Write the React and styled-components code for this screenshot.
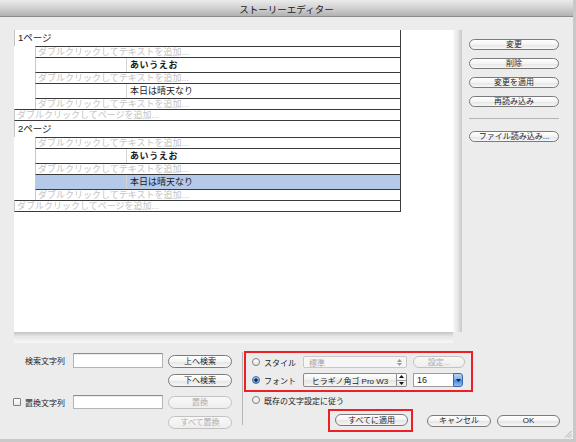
import React from 'react';
import styled, { createGlobalStyle } from 'styled-components';

const FONT = `"Liberation Sans", "Noto Sans CJK JP", sans-serif`;

const GlobalStyle = createGlobalStyle`
  html, body { margin: 0; padding: 0; background: #c9c9c9; }
  body { font-family: ${FONT}; }
  * { box-sizing: border-box; }
`;

const Window = styled.div`
  position: relative;
  width: 573px;
  height: 439px;
  background: #ececec;
  display: flex;
  flex-direction: column;
  font-family: ${FONT};
  color: #1e1e1e;
  overflow: hidden;
`;

const TitleBar = styled.div`
  flex: none;
  height: 17px;
  padding-top: 1px;
  background: linear-gradient(to bottom, #ebebeb 0%, #d4d4d4 45%, #b2b2b2 100%);
  border-bottom: 1px solid #8a8a8a;
  display: flex;
  align-items: center;
  justify-content: center;
  font-size: 9.5px;
  color: #1a1a1a;
`;

const TopArea = styled.div`
  display: flex;
  padding: 13px 0 0 14px;
`;

const ScrollFrame = styled.div`
  display: grid;
  grid-template-columns: 439px 9px;
  grid-template-rows: 302px 11px;
`;

const Canvas = styled.div`
  background: #fff;
  overflow: hidden;
`;

const VTrack = styled.div`
  background: linear-gradient(to right, #f9f9f9, #e8e8e8 50%, #c8c8c8);
`;

const HTrack = styled.div`
  background: linear-gradient(to bottom, #c4c4c4, #e6e6e6 40%, #f8f8f8);
`;

const Outline = styled.div`
  width: 387px;
  border-right: 1px solid #3c3c3c;
`;

const PageHeader = styled.div`
  height: 16px;
  padding-left: 3px;
  border-left: 1px solid #c4c4c4;
  font-size: 9.5px;
  line-height: 15px;
  color: #222;
`;

const PlaceholderRow = styled.div`
  height: ${p => (p.$page ? 12 : 11)}px;
  margin-left: ${p => (p.$page ? 0 : 21)}px;
  border-top: 1px solid #3a3a3a;
  border-bottom: ${p => (p.$page ? '1px solid #3a3a3a' : 'none')};
  border-left: 1px solid #c8c8c8;
  padding-left: 2px;
  font-size: 9px;
  line-height: 10px;
  color: #c4c4c4;
  white-space: nowrap;
  overflow: hidden;
`;

const ContentRow = styled.div`
  height: 15px;
  margin-left: 21px;
  display: flex;
  border-top: 1px solid #3a3a3a;
  border-left: 1px solid #c8c8c8;
  background: ${p => (p.$selected ? '#b5c9e8' : '#fff')};
`;

const KeyCell = styled.div`
  width: 91px;
  border-right: 1px solid #d4d4d4;
`;

const TextCell = styled.div`
  padding-left: 3px;
  font-size: 9px;
  line-height: 14px;
  color: #1a1a1a;
  font-weight: ${p => (p.$bold ? 700 : 400)};
  letter-spacing: ${p => (p.$bold ? '0.6px' : '0')};
`;

const SidePanel = styled.div`
  display: flex;
  flex-direction: column;
  gap: 8px;
  margin: 9px 0 0 7px;
  width: 90px;
`;

const SideSeparator = styled.div`
  height: 1px;
  background: #b4b4b4;
  margin: 3px 0 4px;
`;

const PillButton = styled.button`
  flex: none;
  width: ${p => p.$w}px;
  height: ${p => p.$h || 12}px;
  padding: 0;
  margin-top: ${p => p.$mt || 0}px;
  border-radius: 7px;
  border: 1px solid ${p => (p.disabled ? '#c2c2c2' : '#7a7a7a')};
  background: ${p =>
    p.disabled
      ? 'linear-gradient(to bottom, #f8f8f8, #eeeeee)'
      : 'linear-gradient(to bottom, #ffffff 0%, #f4f4f4 50%, #e6e6e6 55%, #f7f7f7 100%)'};
  font-family: ${FONT};
  font-size: 8px;
  line-height: 9px;
  color: ${p => (p.disabled ? '#adadad' : '#1e1e1e')};
  display: flex;
  align-items: center;
  justify-content: center;
  white-space: nowrap;
  grid-column: ${p => p.$col || 'auto'};
`;

const BottomArea = styled.div`
  display: flex;
`;

const SearchGrid = styled.div`
  width: 242px;
  margin-top: 10px;
  display: grid;
  grid-template-columns: 73px 95px 64px;
  grid-template-rows: 21px 21px 21px 14px;
  align-items: start;
`;

const FieldLabel = styled.div`
  grid-column: 1;
  justify-self: end;
  padding-right: 8px;
  height: ${p => p.$h || 15}px;
  display: flex;
  align-items: center;
  gap: 4px;
  font-size: 8px;
  color: #222;
  white-space: nowrap;
`;

const TextField = styled.div`
  width: 90px;
  height: ${p => p.$h || 15}px;
  background: #fff;
  border: 1px solid #b4b4b4;
  border-top-color: #8e8e8e;
  box-shadow: inset 0 1px 0 rgba(0, 0, 0, 0.08);
`;

const CheckBox = styled.span`
  width: 8px;
  height: 8px;
  border: 1px solid #7f7f7f;
  border-radius: 1px;
  background: linear-gradient(to bottom, #fff, #e9e9e9);
`;

const VSeparator = styled.div`
  flex: none;
  width: 1px;
  height: 73px;
  margin-top: 9px;
  background: #b6b6b6;
`;

const Options = styled.div`
  display: flex;
  flex-direction: column;
  padding-top: 8px;
`;

const Highlight = styled.div`
  border: 2px solid #ec2027;
`;

const OptionBox = styled(Highlight)`
  margin-left: 1px;
  width: 229px;
  height: 41px;
  padding: 3px 0 3px 6px;
  display: flex;
  flex-direction: column;
  gap: 5px;
`;

const OptionRow = styled.div`
  display: flex;
  align-items: center;
  height: ${p => p.$h}px;
  padding-left: ${p => p.$pl || 0}px;
  margin-top: ${p => p.$mt || 0}px;
`;

const Radio = styled.span`
  flex: none;
  width: 8px;
  height: 8px;
  border-radius: 50%;
  border: 1px solid ${p => (p.$on ? '#46689c' : '#7f7f7f')};
  background: ${p =>
    p.$on
      ? 'radial-gradient(circle, #14213f 0 1.4px, transparent 1.9px), linear-gradient(to bottom, #b4d4f6, #5b97e0)'
      : 'linear-gradient(to bottom, #ffffff, #e6e6e6)'};
`;

const OptLabel = styled.span`
  width: ${p => p.$w || 'auto'};
  margin-left: 4px;
  font-size: 8px;
  color: #222;
  white-space: nowrap;
`;

const SelectBox = styled.div`
  width: 104px;
  height: 12px;
  display: flex;
  align-items: center;
  justify-content: space-between;
  padding: 0 4px 0 5px;
  background: #f6f6f6;
  border: 1px solid #c8c8c8;
  border-radius: 2px;
  font-size: 8px;
  color: #a4a4a4;
`;

const Popup = styled.div`
  width: 94px;
  height: 14px;
  display: flex;
  align-items: center;
  justify-content: center;
  background: linear-gradient(to bottom, #ffffff, #f0f0f0 50%, #e4e4e4 55%, #f6f6f6);
  border: 1px solid #8a8a8a;
  border-radius: 2px 0 0 2px;
  font-size: 8px;
  color: #1e1e1e;
  white-space: nowrap;
`;

const Stepper = styled.div`
  width: 10px;
  height: 14px;
  display: flex;
  flex-direction: column;
  border: 1px solid #8a8a8a;
  border-left: none;
  border-radius: 0 2px 2px 0;
  background: linear-gradient(to bottom, #fff, #eaeaea);
`;

const StepHalf = styled.div`
  flex: 1;
  display: flex;
  align-items: center;
  justify-content: center;
  border-top: ${p => (p.$bottom ? '1px solid #9a9a9a' : 'none')};
`;

const Combo = styled.div`
  margin-left: 6px;
  display: flex;
  height: 14px;
`;

const ComboField = styled.div`
  width: 40px;
  height: 14px;
  background: #fff;
  border: 1px solid #9c9c9c;
  border-right: none;
  padding-left: 3px;
  font-family: "Liberation Sans", sans-serif;
  font-size: 9px;
  line-height: 12px;
  color: #1e1e1e;
`;

const ComboButton = styled.div`
  width: 10px;
  height: 14px;
  border: 1px solid #3f66a8;
  border-radius: 0 3px 3px 0;
  background: linear-gradient(to bottom, #b9d6f7 0%, #78aae9 50%, #4d88db 55%, #8cc0f4 100%);
  display: flex;
  align-items: center;
  justify-content: center;
`;

const ButtonRow = styled.div`
  display: flex;
  align-items: center;
  margin-top: 3px;
`;

const ApplyBox = styled(Highlight)`
  margin-left: 85px;
  width: 85px;
  height: 23px;
  padding: 3px 0 0 5px;
`;

const Grip = styled.svg`
  position: absolute;
  right: 1px;
  bottom: 1px;
`;

const Arrow = ({ dir, color, size = 4 }) => (
  <svg width={size + 1} height={size - 1} viewBox="0 0 5 3">
    {dir === 'up' ? (
      <path d="M2.5 0 L5 3 L0 3 Z" fill={color} />
    ) : (
      <path d="M0 0 L5 0 L2.5 3 Z" fill={color} />
    )}
  </svg>
);

const UpDown = styled.div`
  display: flex;
  flex-direction: column;
  gap: 1px;
`;

function PageBlock({ title, selected }) {
  return (
    <>
      <PageHeader>{title}</PageHeader>
      <PlaceholderRow>ダブルクリックしてテキストを追加...</PlaceholderRow>
      <ContentRow>
        <KeyCell />
        <TextCell $bold>あいうえお</TextCell>
      </ContentRow>
      <PlaceholderRow>ダブルクリックしてテキストを追加...</PlaceholderRow>
      <ContentRow $selected={selected}>
        <KeyCell />
        <TextCell>本日は晴天なり</TextCell>
      </ContentRow>
      <PlaceholderRow>ダブルクリックしてテキストを追加...</PlaceholderRow>
      <PlaceholderRow $page>ダブルクリックしてページを追加...</PlaceholderRow>
    </>
  );
}

export default function App() {
  return (
    <>
      <GlobalStyle />
      <Window>
        <TitleBar>ストーリーエディター</TitleBar>
        <TopArea>
          <ScrollFrame>
            <Canvas>
              <Outline>
                <PageBlock title="1ページ" />
                <PageBlock title="2ページ" selected />
              </Outline>
            </Canvas>
            <VTrack />
            <HTrack />
          </ScrollFrame>
          <SidePanel>
            <PillButton $w={90} $h={11}>変更</PillButton>
            <PillButton $w={90} $h={11}>削除</PillButton>
            <PillButton $w={90} $h={11}>変更を適用</PillButton>
            <PillButton $w={90} $h={11}>再読み込み</PillButton>
            <SideSeparator />
            <PillButton $w={90} $h={11}>ファイル読み込み...</PillButton>
          </SidePanel>
        </TopArea>
        <BottomArea>
          <SearchGrid>
            <FieldLabel>検索文字列</FieldLabel>
            <TextField />
            <PillButton $w={64} $h={13} $mt={2}>上へ検索</PillButton>
            <PillButton $w={64} $h={13} $col={3}>下へ検索</PillButton>
            <FieldLabel $h={14}>
              <CheckBox />
              置換文字列
            </FieldLabel>
            <TextField $h={14} />
            <PillButton $w={64} $h={13} $mt={1} disabled>置換</PillButton>
            <PillButton $w={64} $h={13} $col={3} disabled>すべて置換</PillButton>
          </SearchGrid>
          <VSeparator />
          <Options>
            <OptionBox>
              <OptionRow $h={12}>
                <Radio />
                <OptLabel $w="39px">スタイル</OptLabel>
                <SelectBox>
                  <span>標準</span>
                  <UpDown>
                    <Arrow dir="up" color="#9a9a9a" />
                    <Arrow dir="down" color="#9a9a9a" />
                  </UpDown>
                </SelectBox>
                <PillButton $w={52} $h={12} disabled style={{ marginLeft: 6 }}>設定...</PillButton>
              </OptionRow>
              <OptionRow $h={14}>
                <Radio $on />
                <OptLabel $w="39px">フォント</OptLabel>
                <Popup>ヒラギノ角ゴ Pro W3</Popup>
                <Stepper>
                  <StepHalf>
                    <Arrow dir="up" color="#111" />
                  </StepHalf>
                  <StepHalf $bottom>
                    <Arrow dir="down" color="#111" />
                  </StepHalf>
                </Stepper>
                <Combo>
                  <ComboField>16</ComboField>
                  <ComboButton>
                    <Arrow dir="down" color="#0f1e44" />
                  </ComboButton>
                </Combo>
              </OptionRow>
            </OptionBox>
            <OptionRow $h={12} $pl={9} $mt={2}>
              <Radio />
              <OptLabel>既存の文字設定に従う</OptLabel>
            </OptionRow>
            <ButtonRow>
              <ApplyBox>
                <PillButton $w={73} $h={12}>すべてに適用</PillButton>
              </ApplyBox>
              <PillButton $w={64} $h={12} style={{ marginLeft: 14 }}>キャンセル</PillButton>
              <PillButton $w={63} $h={12} style={{ marginLeft: 6 }}>OK</PillButton>
            </ButtonRow>
          </Options>
        </BottomArea>
        <Grip width="8" height="8" viewBox="0 0 8 8">
          <path d="M7.5 1 L1 7.5 M7.5 4 L4 7.5 M7.5 6.5 L6.5 7.5" stroke="#9a9a9a" strokeWidth="0.8" />
        </Grip>
      </Window>
    </>
  );
}
